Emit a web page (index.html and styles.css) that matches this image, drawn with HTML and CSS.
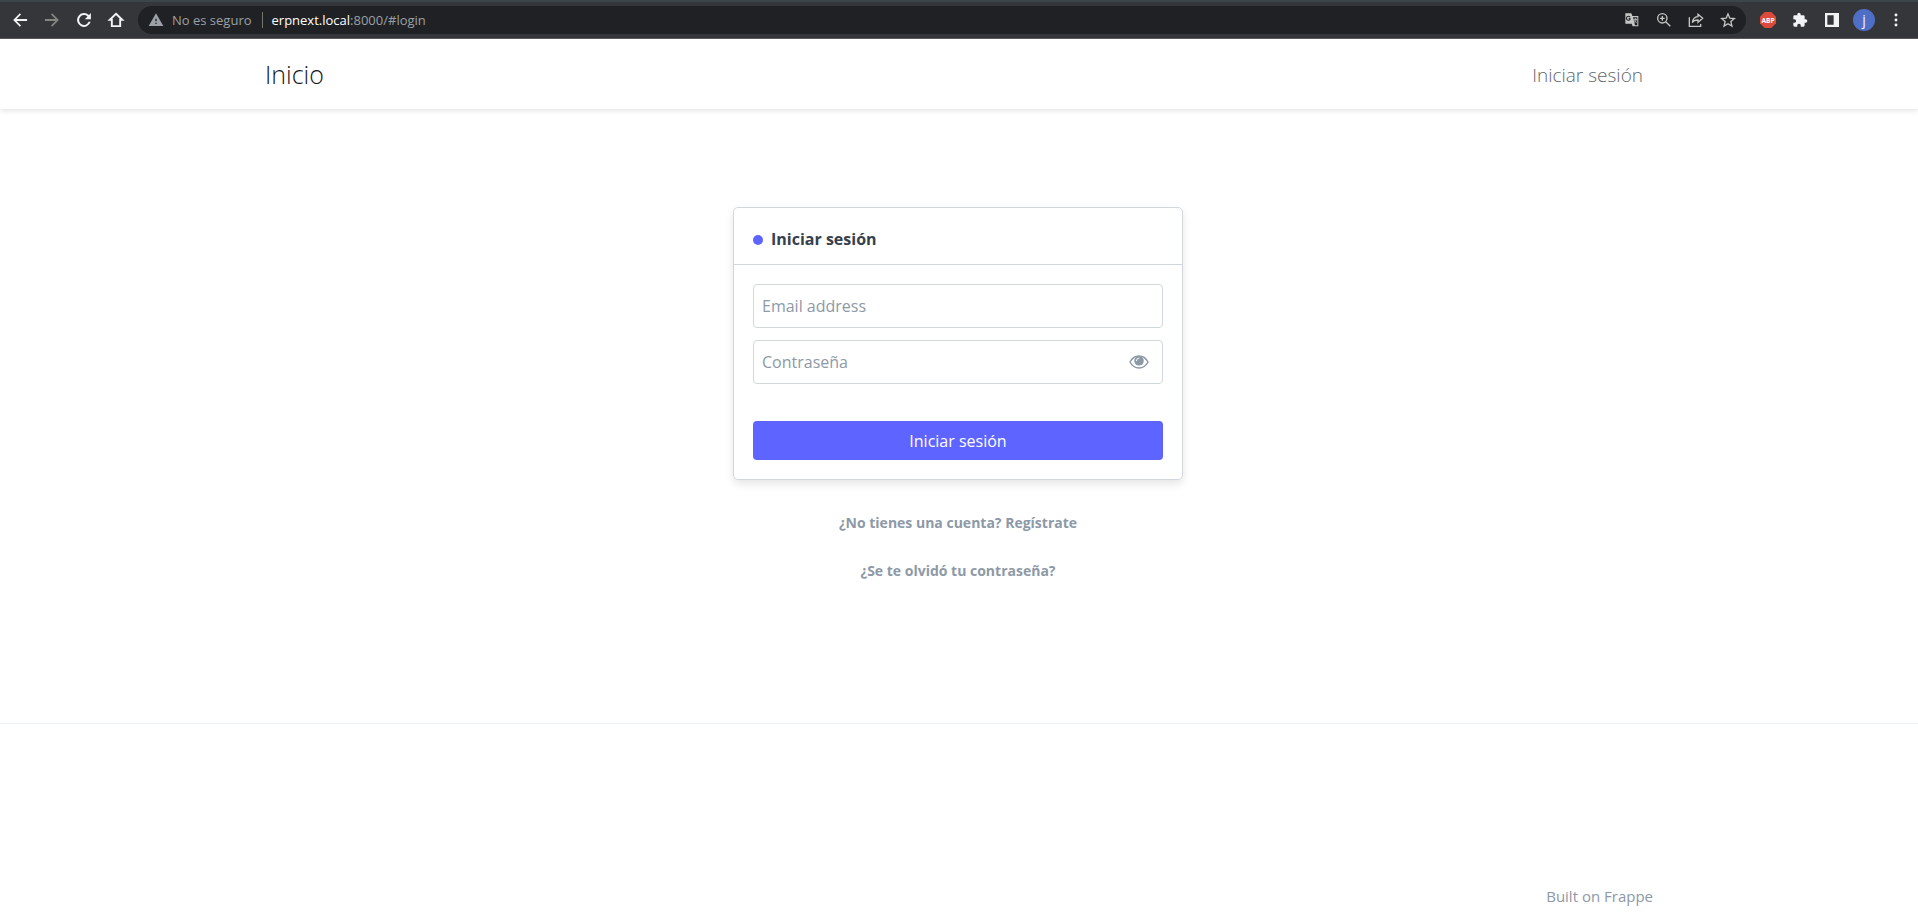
FILE: index.html
```html
<!DOCTYPE html>
<html lang="es">
<head>
<meta charset="utf-8">
<title>Iniciar sesión</title>
<link rel="stylesheet" href="styles.css">
</head>
<body>
<header class="toolbar">
  <div class="toolbar-group nav-tools">
    <button class="tool" aria-label="Atrás"><svg viewBox="0 0 24 24"><path d="M20.500 10.800H7.900l5.300-5.300L11.800 4l-8 8 8 8 1.400-1.500-5.300-5.300h12.600z"/></svg></button>
    <button class="tool tool-off" aria-label="Adelante"><svg viewBox="0 0 24 24"><path d="M3.500 10.800h12.600l-5.300-5.300L12.200 4l8 8-8 8-1.400-1.500 5.300-5.300H3.500z"/></svg></button>
    <button class="tool" aria-label="Recargar"><svg viewBox="0 0 24 24"><path d="M17.900 6.100A8.300 8.300 0 1 0 20 14.200h-2.500A5.900 5.900 0 1 1 16.200 7.800L13 11h7.300V3.700z"/></svg></button>
    <button class="tool" aria-label="Página principal"><svg viewBox="0 0 24 24"><path d="M12 4.500l7.500 7.200H17v7.600H7v-7.600H4.500z" fill="none" stroke="currentColor" stroke-width="2.300"/></svg></button>
  </div>
  <div class="omnibox">
    <svg class="warn" viewBox="0 0 24 24"><path d="M1 21h22L12 2zm12-3h-2v-2h2zm0-4h-2v-4h2z"/></svg>
    <span class="insecure">No es seguro</span>
    <span class="url"><b>erpnext.local</b>:8000/#login</span>
    <div class="toolbar-group omni-actions">
      <button class="tool tool-small" aria-label="Traducir"><svg viewBox="0 0 24 24"><path d="M2 2h9l1.500 4H21.500v15.500H13l-1.500-4H2z"/><path d="M13.500 8H20v12h-3.500z" fill="#202124"/><path d="M9.500 9.800H7M9.300 8A3 3 0 1 0 9.600 10" fill="none" stroke="#202124" stroke-width="1.600"/><path d="M14 11h6M17 9v2M18.800 11c-.5 2-2 3.500-3.500 4.500M15.500 12.500c.8 1.500 2 2.700 3.500 3.500" fill="none" stroke="#c4c7c5" stroke-width="1.300"/></svg></button>
      <button class="tool tool-small" aria-label="Zoom"><svg viewBox="0 0 24 24" class="line"><circle cx="9.500" cy="9.500" r="7"/><path d="M14.500 14.500l7 7M9.500 6v7M6 9.500h7"/></svg></button>
      <button class="tool tool-small" aria-label="Compartir"><svg viewBox="0 0 24 24" class="line"><path d="M2 8v13.500h17V18M15 3.500l7 6-7 6V12c-4 0-7 1-8.500 4 .5-5 3.500-8.500 8.500-9z"/></svg></button>
      <button class="tool tool-small" aria-label="Favoritos"><svg viewBox="0 0 24 24" class="line"><path d="M12 3l2.700 6.300 6.800.6-5.200 4.500 1.600 6.600-5.900-3.500L6.100 21l1.600-6.600-5.200-4.500 6.800-.6z"/></svg></button>
    </div>
  </div>
  <div class="toolbar-group">
    <button class="tool" aria-label="Adblock Plus"><svg viewBox="0 0 24 24"><path d="M7 0h10l7 7v10l-7 7H7l-7-7V7z" fill="#dc4a3d"/><text x="12" y="16" class="abp">ABP</text></svg></button>
    <button class="tool" aria-label="Extensiones"><svg viewBox="0 0 24 24"><path d="M20.500 11H19V7a2 2 0 0 0-2-2h-4V3.500a2.500 2.500 0 0 0-5 0V5H4a2 2 0 0 0-2 2v3.800h1.500a2.700 2.700 0 0 1 0 5.400H2V20a2 2 0 0 0 2 2h3.800v-1.500a2.700 2.700 0 0 1 5.400 0V22H17a2 2 0 0 0 2-2v-4h1.500a2.500 2.500 0 0 0 0-5z"/></svg></button>
    <button class="tool" aria-label="Panel lateral"><svg viewBox="0 0 24 24"><path d="M1.500 1.500h21v21h-21zM5 5v14h9.500V5z" fill-rule="evenodd"/></svg></button>
    <button class="tool avatar" aria-label="Perfil">j</button>
    <button class="tool" aria-label="Menú"><svg viewBox="0 0 24 24"><circle cx="12" cy="4.500" r="2.200"/><circle cx="12" cy="12" r="2.200"/><circle cx="12" cy="19.500" r="2.200"/></svg></button>
  </div>
</header>
<nav class="navbar">
  <div class="container">
    <a class="brand" href="#">Inicio</a>
    <a class="nav-link" href="#login">Iniciar sesión</a>
  </div>
</nav>
<main class="page">
  <form class="card">
    <h1 class="card-head"><span class="dot"></span>Iniciar sesión</h1>
    <div class="card-body">
      <input class="field" type="email" placeholder="Email address" aria-label="Email address">
      <div class="password">
        <input class="field" type="password" placeholder="Contraseña" aria-label="Contraseña">
        <button class="eye" type="button" aria-label="Mostrar contraseña"><svg viewBox="0 0 20 14"><path d="M1 7c2-3.800 5.300-6 9-6s7 2.200 9 6c-2 3.800-5.300 6-9 6S3 10.800 1 7z" fill="none" stroke="currentColor" stroke-width="1.400"/><circle cx="10" cy="5.800" r="4.800"/><path d="M7.300 5.800A2.700 2.700 0 0 1 10 3.100" fill="none" stroke="#fff" stroke-width=".9" stroke-linecap="round"/></svg></button>
      </div>
      <button class="submit" type="button">Iniciar sesión</button>
    </div>
  </form>
  <a class="help" href="#signup">¿No tienes una cuenta? Regístrate</a>
  <a class="help" href="#forgot">¿Se te olvidó tu contraseña?</a>
</main>
<footer class="footer">
  <div class="container"><a class="built" href="#">Built on Frappe</a></div>
</footer>
</body>
</html>
```
FILE: styles.css
```css
* { box-sizing: border-box; }
body {
  margin: 0;
  min-height: 100vh;
  display: flex;
  flex-direction: column;
  background: #fff;
  color: #36414c;
  font-family: "Open Sans", "Noto Sans", sans-serif;
  font-size: 16px;
}
a { color: inherit; text-decoration: none; }
button, input { font: inherit; }

.toolbar {
  display: flex;
  align-items: center;
  gap: 6px;
  height: 39px;
  padding: 0 6px 1px 4px;
  background: #35363a;
  border-top: 2px solid #3c4549;
  border-bottom: 1px solid #5b595e;
}
.toolbar-group { display: flex; align-items: center; }
.tool {
  display: flex;
  align-items: center;
  justify-content: center;
  width: 32px;
  height: 28px;
  padding: 0;
  border: 0;
  background: none;
  color: #f1f3f4;
}
.tool svg { width: 16px; height: 16px; fill: currentColor; }
.nav-tools svg { width: 20px; height: 20px; }
.tool-off { color: #85867f; }
.tool-small { color: #c4c7c5; }
.tool .line { fill: none; stroke: currentColor; stroke-width: 2; }
.abp { fill: #fff; font-size: 10px; font-weight: 700; text-anchor: middle; }
.avatar {
  width: 22px;
  height: 22px;
  margin: 0 5px;
  border-radius: 50%;
  background: #4f6fc6;
  font-size: 14px;
  line-height: 20px;
}
.omnibox {
  flex: 1;
  display: flex;
  align-items: center;
  height: 28px;
  padding: 0 2px 0 10px;
  border-radius: 14px;
  background: #202124;
  color: #9aa0a6;
  font-size: 13px;
}
.warn { width: 16px; height: 16px; margin-right: 8px; fill: #9aa0a6; }
.insecure { padding-right: 10px; border-right: 1px solid #74756f; line-height: 16px; }
.url { margin-left: 9px; }
.url b { color: #fff; font-weight: 400; }
.omni-actions { margin-left: auto; }

.container {
  width: 100%;
  max-width: 1428px;
  margin: 0 auto;
  padding: 0 20px;
  display: flex;
  align-items: center;
  justify-content: space-between;
}
.navbar {
  display: flex;
  height: 70px;
  font-weight: 300;
  box-shadow: 0 2px 5px rgba(0, 0, 0, .1);
}
.brand { font-size: 25px; color: #15191d; }
.nav-link { padding: 2px 10px 0 0; font-size: 19px; color: #62676d; }

.page {
  display: flex;
  flex-direction: column;
  align-items: center;
  padding: 98px 18px 116px 16px;
}
.card {
  width: 100%;
  max-width: 450px;
  margin-bottom: 31px;
  border: 1px solid #d1d8dd;
  border-radius: 5px;
  box-shadow: 0 4px 8px rgba(0, 0, 0, .1);
}
.card-head {
  display: flex;
  align-items: center;
  gap: 8px;
  margin: 0;
  padding: 19px 19px 12px;
  border-bottom: 1px solid #d1d8dd;
  font-size: 16px;
  line-height: 25px;
}
.dot { width: 10px; height: 10px; border-radius: 50%; background: #5e64ff; }
.card-body {
  display: flex;
  flex-direction: column;
  padding: 19px;
}
.field {
  width: 100%;
  height: 44px;
  padding: 0 8px;
  border: 1px solid #d1d8dd;
  border-radius: 4px;
  background: #fff;
}
.field::placeholder { color: #8d99a6; }
.password { position: relative; margin: 12px 0 37px; }
.eye {
  position: absolute;
  top: 15px;
  right: 14px;
  display: flex;
  padding: 0;
  border: 0;
  background: none;
  color: #8d99a6;
}
.eye svg { width: 20px; height: 14px; fill: currentColor; }
.submit {
  height: 39px;
  padding: 0;
  border: 0;
  border-radius: 4px;
  background: #5e64ff;
  color: #fff;
}
.help {
  margin-bottom: 24px;
  color: #8d99a6;
  font-size: 14px;
  font-weight: 700;
  line-height: 24px;
}
.footer {
  flex: 1;
  display: flex;
  align-items: flex-end;
  padding: 16px 0 9px;
  border-top: 1px solid #ebeff2;
}
.built { margin-left: auto; color: #8d99a6; font-size: 15px; line-height: 24px; }
```
